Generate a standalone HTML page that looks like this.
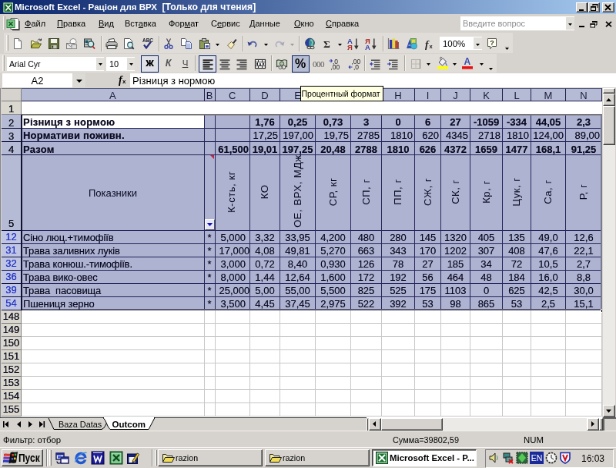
<!DOCTYPE html>
<html lang="ru"><head><meta charset="utf-8"><title>Microsoft Excel - Раціон для ВРХ</title>
<style>
html,body{margin:0;padding:0;background:#d6d3ce;}
body{width:616px;height:468px;overflow:hidden;position:relative;}
#root{will-change:transform;position:absolute;left:0;top:0;width:800px;height:600px;transform:scale(0.77,0.78);transform-origin:0 0;background:#d6d3ce;font-family:"Liberation Sans",sans-serif;font-size:11px;color:#000;overflow:hidden;}
#root div,#root span,#root svg{position:absolute;box-sizing:border-box;white-space:nowrap;}
.t{font-family:"Liberation Sans",sans-serif;}
.c{font-size:13px;line-height:17px;height:17px;text-shadow:0 0 .6px rgba(10,10,32,.55);}
.b{font-weight:bold;}
.sep{width:2px;border-left:1px solid #808080;border-right:1px solid #fff;}
.btn3d{background:#d6d3ce;border:1px solid;border-color:#fff #404040 #404040 #fff;box-shadow:inset -1px -1px 0 #808080;}
.sunk{border:1px solid;border-color:#808080 #fff #fff #808080;}
.xpsel{background:#b6bdd2;border:1px solid #0a246a;}
.xpon{background:#e0e1e8;border:1px solid #0a246a;}
</style></head>
<body><div id="root">
<div style="left:0px;top:0px;width:800px;height:18.4px;background:linear-gradient(90deg,#0a246a 0%,#a6caf0 100%);"></div>
<svg style="left:3.5px;top:2.5px" width="13.5" height="13.5" viewBox="0 0 16 16" preserveAspectRatio="none"><rect x="0" y="0" width="16" height="16" fill="#17642a"/><rect x="1.2" y="1.2" width="13.6" height="13.6" fill="none" stroke="#bfe6c4" stroke-width="1.3"/><path d="M4 3.500 L12 12.500 M12 3.500 L4 12.500" stroke="#f4fff4" stroke-width="2" fill="none"/></svg>
<span class="t" style="left:19px;top:2px;color:#fff;font-weight:bold;font-size:11.55px;line-height:14px;">Microsoft Excel - Раціон для ВРХ</span>
<span class="t" style="left:210.5px;top:2px;color:#fff;font-weight:bold;font-size:12.2px;line-height:14px;">[Только для чтения]</span>
<div class='btn3d' style="left:748px;top:3px;width:15px;height:13px;"></div>
<div style="left:752px;top:12px;width:6px;height:2px;background:#000"></div>
<div class='btn3d' style="left:764px;top:3px;width:15px;height:13px;"></div>
<svg style="left:766px;top:4px" width="12" height="11" viewBox="0 0 12 11"><path d="M4 1.5h6v4.5M4 1.5v2" stroke="#000" stroke-width="1" fill="none"/><rect x="3.5" y="1" width="7" height="1.6" fill="#000"/><rect x="1.5" y="4.5" width="6" height="5" fill="#d6d3ce" stroke="#000"/><rect x="1" y="4" width="7" height="1.8" fill="#000"/></svg>
<div class='btn3d' style="left:782px;top:3px;width:16px;height:13px;"></div>
<svg style="left:785px;top:5px" width="10" height="9" viewBox="0 0 10 9"><path d="M1 1l7 7M8 1l-7 7" stroke="#000" stroke-width="1.8" fill="none"/></svg>
<div style="left:0px;top:18px;width:800px;height:23px;background:#d6d3ce;"></div>
<div style="left:4px;top:21px;width:3px;height:17px;border-left:1px solid #f6f4f0;border-right:1px solid #a8a49c;background:#d6d3ce"></div>
<svg style="left:8px;top:22px" width="18" height="18" viewBox="0 0 18 18"><path d="M6 1.500h8.500l2 2v12h-10.500z" fill="#fff" stroke="#555"/><path d="M17 5v11.500h-9" stroke="#333" fill="none" stroke-width="1.200"/><rect x="1" y="3.500" width="10" height="10" fill="#7cc88a" stroke="#2a7a3a"/><path d="M3.500 6l5 5M8.500 6l-5 5" stroke="#155a25" stroke-width="1.600"/></svg>
<span class="t" style="left:32px;top:23px;font-size:11px;line-height:14px;"><u>Ф</u>айл</span>
<span class="t" style="left:74px;top:23px;font-size:11px;line-height:14px;"><u>П</u>равка</span>
<span class="t" style="left:128px;top:23px;font-size:11px;line-height:14px;"><u>В</u>ид</span>
<span class="t" style="left:162px;top:23px;font-size:11px;line-height:14px;">Вст<u>а</u>вка</span>
<span class="t" style="left:219px;top:23px;font-size:11px;line-height:14px;">Фор<u>м</u>ат</span>
<span class="t" style="left:274px;top:23px;font-size:11px;line-height:14px;">С<u>е</u>рвис</span>
<span class="t" style="left:324px;top:23px;font-size:11px;line-height:14px;"><u>Д</u>анные</span>
<span class="t" style="left:382px;top:23px;font-size:11px;line-height:14px;"><u>О</u>кно</span>
<span class="t" style="left:423px;top:23px;font-size:11px;line-height:14px;"><u>С</u>правка</span>
<div style="left:598px;top:21px;width:148px;height:18px;background:#fff;"></div>
<span class="t" style="left:601px;top:23px;color:#8c8c8c;font-size:11px;line-height:14px;">Введите вопрос</span>
<div style="left:735px;top:22px;width:11px;height:16px;background:#e0ded8;"></div>
<svg style="left:738px;top:29.5px" width="5" height="3" viewBox="0 0 5 3"><path d="M0 0h5l-2.5 3z" fill="#000"/></svg>
<div style="left:752px;top:32.5px;width:7px;height:2.2px;background:#000"></div>
<svg style="left:765.5px;top:25.500px" width="10" height="10" viewBox="0 0 10 10"><path d="M3.500 1.500h5.500v4.500h-1.500" stroke="#000" stroke-width="1" fill="none"/><rect x="3" y="1" width="6.500" height="1.800" fill="#000"/><rect x="1" y="4.500" width="5.500" height="4.500" fill="#f4f4f0" stroke="#000"/><rect x=".500" y="4" width="6.500" height="1.800" fill="#000"/></svg>
<svg style="left:785.5px;top:27px" width="9" height="8" viewBox="0 0 9 8"><path d="M1 .800l7 6.400M8 .800l-7 6.400" stroke="#000" stroke-width="1.700" fill="none"/></svg>
<div style="left:0px;top:43px;width:800px;height:26px;background:#d6d3ce;"></div>
<div style="left:5px;top:42px;width:661px;height:26px;background:#e0ddd8;"></div>
<div style="left:8px;top:45px;width:3px;height:20px;border-left:1px solid #f6f4f0;border-right:1px solid #a8a49c;"></div>
<svg style="left:15.399999999999999px;top:47.5px" width="16" height="16" viewBox="0 0 16 16"><path d="M3.5 1.5h6l3 3v10h-9z" fill="#fff" stroke="#6a6a6a"/><path d="M9.5 1.5v3h3" fill="#e8e8e8" stroke="#6a6a6a"/></svg>
<svg style="left:38.7px;top:47.5px" width="16" height="16" viewBox="0 0 16 16"><path d="M1.5 13.5v-9h3l1 1.5h5v2" fill="#f2f0a4" stroke="#55551a"/><path d="M1.5 13.5l2.5-5.5h10.5l-3 5.5z" fill="#b9b94a" stroke="#55551a"/><path d="M10 3.5c1.5-2 3.5-1.5 4 0M14.5 1.5v2.3h-2.3" fill="none" stroke="#222" stroke-width="1"/></svg>
<svg style="left:61.900000000000006px;top:47.5px" width="16" height="16" viewBox="0 0 16 16"><rect x="1.5" y="1.5" width="13" height="13" fill="#66743c" stroke="#343c20"/><rect x="4" y="2" width="8" height="5" fill="#f2f2f2"/><rect x="4" y="9.5" width="8" height="5" fill="#c8c8c0" stroke="#3a4420" stroke-width=".6"/><rect x="5.2" y="10.5" width="2" height="3" fill="#3a4420"/></svg>
<svg style="left:85.0px;top:47.5px" width="16" height="16" viewBox="0 0 16 16"><circle cx="10" cy="5.5" r="4" fill="#f8f8f8" stroke="#8a8a8a"/><rect x="1.5" y="7.5" width="10" height="7" fill="#e6e6e6" stroke="#7a7a7a"/><path d="M1.5 7.5l5 4 5-4" fill="none" stroke="#7a7a7a"/><rect x="8" y="9" width="6.5" height="5.5" fill="#dcdcdc" stroke="#8a8a8a"/></svg>
<svg style="left:108.2px;top:47.5px" width="16" height="16" viewBox="0 0 16 16"><rect x="1.500" y="2" width="9" height="10" fill="#c8d0d0" stroke="#333"/><rect x="2.500" y="3.500" width="4" height="3.500" fill="#1a5a6a"/><path d="M2.500 9h5" stroke="#345" /><circle cx="10" cy="8.500" r="3.700" fill="#cfeaea" stroke="#2a4a4a" stroke-width="1.400"/><path d="M12.5 11.5l2.5 3" stroke="#c02020" stroke-width="1.8"/></svg>
<div style="left:131px;top:46px;width:1px;height:20px;background:#a6a398;"></div>
<div style="left:132px;top:46px;width:1px;height:20px;background:#f4f2ee;"></div>
<svg style="left:137.0px;top:47.5px" width="16" height="16" viewBox="0 0 16 16"><path d="M4.500 6v-3.500l6.500-1 1 4.500" fill="#fff" stroke="#444"/><path d="M1 7.500l3-2h9l2 2v4.500h-14z" fill="#a4a4a4" stroke="#333"/><path d="M1 8h14" stroke="#d8d8d8" stroke-width="1"/><path d="M3 10.500h10l1 4h-12z" fill="#eee" stroke="#333"/><rect x="11.500" y="8.800" width="1.800" height="1" fill="#4a4"/></svg>
<svg style="left:159.0px;top:47.5px" width="16" height="16" viewBox="0 0 16 16"><path d="M2.5 1.5h7l3 3v10h-10z" fill="#fff" stroke="#555"/><circle cx="10" cy="9.5" r="3.3" fill="#d6efef" stroke="#2a5a6a" stroke-width="1.2"/><path d="M12.3 12l2.4 2.8" stroke="#2a3a4a" stroke-width="1.8"/></svg>
<svg style="left:182.7px;top:47.5px" width="16" height="16" viewBox="0 0 16 16"><text x="2" y="6" font-family="Liberation Sans,sans-serif" font-size="6.500" font-weight="bold" fill="#223">ABC</text><path d="M4 9.500l3 4 6-8" fill="none" stroke="#2a2f80" stroke-width="2.200"/></svg>
<div style="left:206px;top:46px;width:1px;height:20px;background:#a6a398;"></div>
<div style="left:207px;top:46px;width:1px;height:20px;background:#f4f2ee;"></div>
<svg style="left:211.0px;top:47.5px" width="16" height="16" viewBox="0 0 16 16"><path d="M5.5 1.5l4.5 9M10.5 1.5l-4.500 9" stroke="#445" stroke-width="1.2" fill="none"/><circle cx="5" cy="12.3" r="2" fill="none" stroke="#3a4ab0" stroke-width="1.4"/><circle cx="11" cy="12.300" r="2" fill="none" stroke="#3a4ab0" stroke-width="1.4"/></svg>
<svg style="left:233.7px;top:47.5px" width="16" height="16" viewBox="0 0 16 16"><path d="M1.5 1.5h5l2 2v7h-7z" fill="#fff" stroke="#556"/><path d="M7.5 5.500h5l2 2v7h-7z" fill="#dfe6f8" stroke="#445a9a"/><path d="M9 9h4M9 11h4M9 13h4" stroke="#7a8ac0" stroke-width=".8"/></svg>
<svg style="left:258.0px;top:47.5px" width="16" height="16" viewBox="0 0 16 16"><rect x="1.5" y="3.5" width="11" height="11" fill="#8a9a5a" stroke="#3c4424"/><rect x="4.5" y="1.5" width="5" height="3.5" fill="#c8c8c8" stroke="#444"/><rect x="7.500" y="7.500" width="7" height="7" fill="#fff" stroke="#445"/><rect x="9" y="10" width="4" height="3" fill="#4a5ab0"/></svg>
<svg style="left:280.0px;top:55.5px" width="5" height="3" viewBox="0 0 5 3"><path d="M0 0h5l-2.5 3z" fill="#000"/></svg>
<svg style="left:293.0px;top:47.5px" width="16" height="16" viewBox="0 0 16 16"><path d="M9 7l4-5 1.500 1.200-4 5z" fill="#333"/><path d="M2.500 10l5-4.500 4 3.500-4.500 5.500z" fill="#f6edc0" stroke="#7a6a3a"/></svg>
<div style="left:315px;top:46px;width:1px;height:20px;background:#a6a398;"></div>
<div style="left:316px;top:46px;width:1px;height:20px;background:#f4f2ee;"></div>
<svg style="left:320.0px;top:47.5px" width="16" height="16" viewBox="0 0 16 16"><path d="M4.500 8.500c1.500-3.500 6.500-4 8-.500 .6 1.600-.2 3-1.200 3.800" fill="none" stroke="#5564a8" stroke-width="1.700"/><path d="M1.500 5.500l1.500 5.500 4.500-3z" fill="#3a478c"/></svg>
<svg style="left:343.1px;top:55.5px" width="5" height="3" viewBox="0 0 5 3"><path d="M0 0h5l-2.5 3z" fill="#000"/></svg>
<svg style="left:355.0px;top:47.5px" width="16" height="16" viewBox="0 0 16 16"><path d="M11.500 8.500c-1.500-3.500-6.500-4-8-.500-.6 1.600 .2 3 1.200 3.800" fill="none" stroke="#b4b4c0" stroke-width="1.700"/><path d="M14.500 5.500l-1.500 5.500-4.500-3z" fill="#a8a8b8"/></svg>
<svg style="left:376.5px;top:55.5px" width="5" height="3" viewBox="0 0 5 3"><path d="M0 0h5l-2.5 3z" fill="#9a9a9a"/></svg>
<div style="left:388px;top:46px;width:1px;height:20px;background:#a6a398;"></div>
<div style="left:389px;top:46px;width:1px;height:20px;background:#f4f2ee;"></div>
<svg style="left:394.7px;top:47.5px" width="16" height="16" viewBox="0 0 16 16"><circle cx="7.500" cy="7" r="5.800" fill="#3a8f9a" stroke="#24406a"/><path d="M7.500 1.200a5.800 5.800 0 0 0 0 11.600c-2-3-2-8 0-11.600z" fill="#2c3c9c"/><path d="M8.500 3c2 1 3 3 2 5s0 3 1 3.500" fill="none" stroke="#8ad0a0" stroke-width="1.600"/><ellipse cx="6.500" cy="13" rx="2.600" ry="1.700" fill="#ddd" stroke="#333"/><ellipse cx="10.500" cy="13" rx="2.600" ry="1.700" fill="#ddd" stroke="#333"/></svg>
<span class="t" style="left:420px;top:48.5px;font-family:'Liberation Serif',serif;font-weight:bold;font-size:13.5px;line-height:15px;color:#222;">Σ</span>
<svg style="left:439.2px;top:55.5px" width="5" height="3" viewBox="0 0 5 3"><path d="M0 0h5l-2.5 3z" fill="#000"/></svg>
<svg style="left:451.0px;top:47.5px" width="16" height="16" viewBox="0 0 16 16"><text x="0" y="7.800" font-family="Liberation Sans,sans-serif" font-size="9.500" font-weight="bold" fill="#3844a8">А</text><text x="0" y="15.800" font-family="Liberation Sans,sans-serif" font-size="9.500" font-weight="bold" fill="#a83030">Я</text><path d="M11.800 1.500v11" stroke="#333" stroke-width="1.400"/><path d="M9 10.500h5.600l-2.800 5z" fill="#333"/></svg>
<svg style="left:474.0px;top:47.5px" width="16" height="16" viewBox="0 0 16 16"><text x="0" y="7.800" font-family="Liberation Sans,sans-serif" font-size="9.500" font-weight="bold" fill="#a83030">Я</text><text x="0" y="15.800" font-family="Liberation Sans,sans-serif" font-size="9.500" font-weight="bold" fill="#3844a8">А</text><path d="M11.800 1.500v11" stroke="#333" stroke-width="1.400"/><path d="M9 10.500h5.600l-2.800 5z" fill="#333"/></svg>
<div style="left:497px;top:46px;width:1px;height:20px;background:#a6a398;"></div>
<div style="left:498px;top:46px;width:1px;height:20px;background:#f4f2ee;"></div>
<svg style="left:503.0px;top:47.5px" width="16" height="16" viewBox="0 0 16 16"><path d="M1.500 1v13.500h14" fill="none" stroke="#777" stroke-width="1.200"/><rect x="3" y="3" width="3.400" height="11" fill="#3838a4"/><rect x="6.600" y="1.500" width="3.400" height="12.500" fill="#e8d838"/><rect x="10.200" y="4" width="3.400" height="10" fill="#b84430"/><rect x="13.200" y="6" width="1.600" height="8" fill="#8a3a3a"/></svg>
<svg style="left:526.7px;top:47.5px" width="16" height="16" viewBox="0 0 16 16"><path d="M1 14l4-12 3.500 12z" fill="#3450b4"/><path d="M3.500 10h3" stroke="#dfe6ff" stroke-width="1"/><rect x="6.500" y="1.500" width="7" height="7" fill="#8ac858" stroke="#3a6a2a" stroke-width=".6"/><rect x="8" y="3" width="4" height="4" fill="#e8d848"/><circle cx="10.500" cy="11" r="4" fill="#40b8d8" stroke="#2a6a8a" stroke-width=".6"/></svg>
<span class="t" style="left:552px;top:48.5px;font-family:'Liberation Serif',serif;font-weight:bold;font-size:13.5px;line-height:15px;color:#222;"><i>f</i></span>
<span class="t" style="left:557.5px;top:55px;font-weight:bold;font-size:7.500px;line-height:9px;color:#222;">x</span>
<div style="left:571px;top:47px;width:55px;height:17px;background:#fff;"></div>
<span class="t" style="left:575px;top:49px;font-size:11.400px;line-height:14px;">100%</span>
<div style="left:615px;top:48px;width:11px;height:15px;background:#e2e0da;"></div>
<svg style="left:618.0px;top:55.5px" width="5" height="3" viewBox="0 0 5 3"><path d="M0 0h5l-2.5 3z" fill="#000"/></svg>
<svg style="left:631.0px;top:47.5px" width="16" height="16" viewBox="0 0 16 16"><path d="M2.500 1.500h11v10h-5l-3 3v-3h-3z" fill="#fffff0" stroke="#555"/><text x="5.300" y="10" font-family="Liberation Sans,sans-serif" font-size="9" font-weight="bold" fill="#333">?</text></svg>
<svg style="left:655.5px;top:60.5px" width="5" height="3" viewBox="0 0 5 3"><path d="M0 0h5l-2.5 3z" fill="#000"/></svg>
<div style="left:655px;top:58.5px;width:6px;height:1px;background:#d6d3ce"></div>
<div style="left:0px;top:69px;width:800px;height:25px;background:#d6d3ce;"></div>
<div style="left:0px;top:69px;width:645px;height:24px;background:#e0ddd8;"></div>
<div style="left:3px;top:71px;width:3px;height:20px;border-left:1px solid #f6f4f0;border-right:1px solid #a8a49c;"></div>
<div style="left:9px;top:73px;width:126px;height:18px;background:#fff;"></div>
<span class="t" style="left:12px;top:75px;font-size:10.6px;line-height:14px;">Arial Cyr</span>
<div style="left:125px;top:74px;width:10px;height:16px;background:#e2e0da;"></div>
<svg style="left:127.5px;top:81.0px" width="5" height="3" viewBox="0 0 5 3"><path d="M0 0h5l-2.5 3z" fill="#000"/></svg>
<div style="left:138px;top:73px;width:37px;height:18px;background:#fff;"></div>
<span class="t" style="left:142px;top:75px;font-size:11px;line-height:14px;">10</span>
<div style="left:165px;top:74px;width:10px;height:16px;background:#e2e0da;"></div>
<svg style="left:167.5px;top:81.0px" width="5" height="3" viewBox="0 0 5 3"><path d="M0 0h5l-2.5 3z" fill="#000"/></svg>
<div class='xpon' style="left:183px;top:70.5px;width:23px;height:22px;"></div>
<span class="t" style="left:183px;top:74px;width:23px;text-align:center;font-weight:bold;font-size:11.5px;line-height:15px;text-shadow:.3px 0 0 #000;">Ж</span>
<span class="t" style="left:207px;top:74px;width:23px;text-align:center;font-weight:bold;font-size:12.5px;line-height:15px;color:#555;"><i>К</i></span>
<span class="t" style="left:229px;top:74px;width:23px;text-align:center;font-size:11.5px;line-height:15px;color:#444;"><u>Ч</u></span>
<div style="left:253px;top:71px;width:1px;height:20px;background:#a6a398;"></div>
<div style="left:254px;top:71px;width:1px;height:20px;background:#f4f2ee;"></div>
<div class='xpon' style="left:258px;top:70.5px;width:23px;height:22px;"></div>
<svg style="left:261.5px;top:73.5px" width="16" height="16" viewBox="0 0 16 16"><rect x="1.5" y="2.2" width="13" height="2" fill="#2c2c2c"/><rect x="1.5" y="5.0" width="9" height="2" fill="#2c2c2c"/><rect x="1.5" y="7.8" width="13" height="2" fill="#2c2c2c"/><rect x="1.5" y="10.599999999999998" width="9" height="2" fill="#2c2c2c"/><rect x="1.5" y="13.399999999999999" width="13" height="2" fill="#2c2c2c"/></svg>
<svg style="left:284.0px;top:73.5px" width="16" height="16" viewBox="0 0 16 16"><rect x="1.5" y="2.2" width="13" height="2" fill="#5a5a5a"/><rect x="3.5" y="5.0" width="9" height="2" fill="#5a5a5a"/><rect x="1.5" y="7.8" width="13" height="2" fill="#5a5a5a"/><rect x="3.5" y="10.599999999999998" width="9" height="2" fill="#5a5a5a"/><rect x="1.5" y="13.399999999999999" width="13" height="2" fill="#5a5a5a"/></svg>
<svg style="left:306.0px;top:73.5px" width="16" height="16" viewBox="0 0 16 16"><rect x="1.5" y="2.2" width="13" height="2" fill="#5a5a5a"/><rect x="5.5" y="5.0" width="9" height="2" fill="#5a5a5a"/><rect x="1.5" y="7.8" width="13" height="2" fill="#5a5a5a"/><rect x="5.5" y="10.599999999999998" width="9" height="2" fill="#5a5a5a"/><rect x="1.5" y="13.399999999999999" width="13" height="2" fill="#5a5a5a"/></svg>
<svg style="left:330.0px;top:73.5px" width="16" height="16" viewBox="0 0 16 16"><rect x="1.500" y="2.500" width="13" height="11" fill="#fff" stroke="#333" stroke-width="1.200"/><path d="M1.500 5.500h13M1.500 10.500h13M5.500 2.500v3M10.500 2.500v3M5.500 10.500v3M10.500 10.500v3" stroke="#333" stroke-width="1"/><path d="M2.500 8l2.500-2v4zM13.500 8l-2.500-2v4z" fill="#111"/><text x="6.200" y="10" font-family="Liberation Sans,sans-serif" font-size="5.500" font-weight="bold" fill="#111">a</text></svg>
<div style="left:352px;top:71px;width:1px;height:20px;background:#a6a398;"></div>
<div style="left:353px;top:71px;width:1px;height:20px;background:#f4f2ee;"></div>
<svg style="left:358.0px;top:73.5px" width="16" height="16" viewBox="0 0 16 16"><path d="M1.500 3.500c3-2 5 1 7 0s4-1 6 0v8c-2-1-4-1-6 0s-4-2-7 0z" fill="#cdd6c4" stroke="#3a4a3a" stroke-width="1.200"/><circle cx="8" cy="7.500" r="2.600" fill="#b4c0a8" stroke="#3a4a3a" stroke-width="1"/><circle cx="10.500" cy="12" r="2.400" fill="#dedede" stroke="#444" stroke-width="1"/><circle cx="6" cy="12.500" r="2" fill="#d0d0d0" stroke="#555" stroke-width=".8"/></svg>
<div class='xpsel' style="left:378.5px;top:70.5px;width:23px;height:22px;"></div>
<span class="t" style="left:378.5px;top:72.5px;width:23px;text-align:center;font-weight:bold;font-size:16px;line-height:17px;">%</span>
<span class="t" style="left:402px;top:75px;width:23px;text-align:center;font-family:'Liberation Serif',serif;font-size:11px;line-height:14px;color:#555;letter-spacing:-.5px">000</span>
<svg style="left:427.0px;top:73.5px" width="16" height="16" viewBox="0 0 16 16"><text x="5" y="7.500" font-family="Liberation Sans,sans-serif" font-size="8.500" fill="#222">,0</text><text x="2.500" y="15.500" font-family="Liberation Sans,sans-serif" font-size="8.500" fill="#222">,00</text><path d="M0.500 4h4M4.500 4l-2-1.800M4.500 4l-2 1.800" stroke="#3040b0" stroke-width="1.100" fill="none"/></svg>
<svg style="left:452.0px;top:73.5px" width="16" height="16" viewBox="0 0 16 16"><text x="4.500" y="7.500" font-family="Liberation Sans,sans-serif" font-size="8.500" fill="#222">,00</text><text x="7" y="15.500" font-family="Liberation Sans,sans-serif" font-size="8.500" fill="#222">,0</text><path d="M1 12h4.500M1 12l2-1.800M1 12l2 1.800" stroke="#3040b0" stroke-width="1.100" fill="none"/></svg>
<div style="left:473px;top:71px;width:1px;height:20px;background:#a6a398;"></div>
<div style="left:474px;top:71px;width:1px;height:20px;background:#f4f2ee;"></div>
<svg style="left:479.0px;top:73.5px" width="16" height="16" viewBox="0 0 16 16"><rect x="3" y="2.5" width="11.5" height="1.400" fill="#444"/><rect x="7" y="5.3" width="7.5" height="1.400" fill="#444"/><rect x="7" y="8.1" width="7.5" height="1.400" fill="#444"/><rect x="7" y="10.899999999999999" width="7.5" height="1.400" fill="#444"/><rect x="3" y="13.7" width="11.5" height="1.400" fill="#444"/><path d="M1 8l3-2.500v5z" fill="#3a4ab0"/><rect x="3.500" y="7.400" width="2.500" height="1.200" fill="#3a4ab0"/></svg>
<svg style="left:502.0px;top:73.5px" width="16" height="16" viewBox="0 0 16 16"><rect x="3" y="2.5" width="11.5" height="1.400" fill="#444"/><rect x="7" y="5.3" width="7.5" height="1.400" fill="#444"/><rect x="7" y="8.1" width="7.5" height="1.400" fill="#444"/><rect x="7" y="10.899999999999999" width="7.5" height="1.400" fill="#444"/><rect x="3" y="13.7" width="11.5" height="1.400" fill="#444"/><path d="M6 8l-3-2.500v5z" fill="#3a4ab0"/><rect x="1" y="7.400" width="2.500" height="1.200" fill="#3a4ab0"/></svg>
<div style="left:525px;top:71px;width:1px;height:20px;background:#a6a398;"></div>
<div style="left:526px;top:71px;width:1px;height:20px;background:#f4f2ee;"></div>
<svg style="left:532.0px;top:73.5px" width="16" height="16" viewBox="0 0 16 16"><rect x="2.500" y="2.500" width="11" height="11" fill="none" stroke="#b0aea6" stroke-width="1"/><path d="M8 2.500v11M2.500 8h11" stroke="#bcbab2" stroke-width="1"/><path d="M13.500 2v12" stroke="#8a8880" stroke-width="1.200"/></svg>
<svg style="left:553.5px;top:81.0px" width="5" height="3" viewBox="0 0 5 3"><path d="M0 0h5l-2.5 3z" fill="#000"/></svg>
<svg style="left:567.0px;top:72.0px" width="16" height="17" viewBox="0 0 16 17"><path d="M3 8l5-5.500 4.500 4.500-5 5z" fill="#f0f0f0" stroke="#445"/><path d="M7 2c-2-2-3 .5-1.500 2.500" fill="none" stroke="#445"/><path d="M11 8c2 1 3 3 2.500 5-.8-1-2-2.500-2.500-5z" fill="#4a6ac0"/><rect x="1" y="13" width="14" height="3.500" fill="#ffff00"/></svg>
<svg style="left:587.5px;top:81.0px" width="5" height="3" viewBox="0 0 5 3"><path d="M0 0h5l-2.5 3z" fill="#000"/></svg>
<svg style="left:599.0px;top:72.0px" width="16" height="17" viewBox="0 0 16 17"><text x="3.500" y="11" font-family="Liberation Sans,sans-serif" font-size="12" font-weight="bold" fill="#3a4ab0">A</text><rect x="1" y="13" width="14" height="3.500" fill="#e81010"/></svg>
<svg style="left:622.5px;top:81.0px" width="5" height="3" viewBox="0 0 5 3"><path d="M0 0h5l-2.5 3z" fill="#000"/></svg>
<svg style="left:634.5px;top:86.5px" width="5" height="3" viewBox="0 0 5 3"><path d="M0 0h5l-2.5 3z" fill="#000"/></svg>
<div style="left:0px;top:93px;width:800px;height:20px;background:#d6d3ce;"></div>
<div style="left:3px;top:94px;width:91px;height:18px;background:#fff;"></div>
<span class="t" style="left:3px;top:96px;font-size:13px;line-height:15px;width:91px;text-align:center;">A2</span>
<div style="left:94px;top:94px;width:17px;height:18px;background:#dcdad4;"></div>
<svg style="left:99px;top:102px" width="8" height="4" viewBox="0 0 8 4"><path d="M0 0h8l-4.0 4z" fill="#000"/></svg>
<span class="t" style="left:154px;top:95px;font-family:'Liberation Serif',serif;font-weight:bold;font-size:14px;line-height:15px;"><i>f</i></span>
<span class="t" style="left:159px;top:100px;font-family:'Liberation Sans',sans-serif;font-weight:bold;font-size:8px;line-height:9px;">x</span>
<div style="left:169px;top:94px;width:631px;height:18px;background:#fff;"></div>
<span class="t" style="left:172px;top:96px;font-size:13px;line-height:15px;">Різниця з нормою</span>
<div style="left:0px;top:113px;width:800px;height:423px;background:#fff;"></div>
<div style="left:0px;top:113px;width:2px;height:423px;background:#d6d3ce;"></div>
<div style="left:0px;top:113px;width:1.3px;height:423px;background:#85858c;"></div>
<div style="left:2px;top:113px;width:26px;height:17px;background:#d6d3ce;border-right:1px solid #808080;border-bottom:1px solid #808080;border-top:1px solid #808080"></div>
<div style="left:28px;top:113px;width:237.5px;height:17px;background:#b5bbd5;border-right:1px solid #20204c;border-bottom:1px solid #20204c;border-top:1px solid #55597a;"></div>
<span class="t" style="left:28px;top:115px;width:236.5px;text-align:center;font-size:13px;line-height:15px;color:#1a1a3a;">A</span>
<div style="left:265.5px;top:113px;width:14.0px;height:17px;background:#b5bbd5;border-right:1px solid #20204c;border-bottom:1px solid #20204c;border-top:1px solid #55597a;"></div>
<span class="t" style="left:265.5px;top:115px;width:13.0px;text-align:center;font-size:13px;line-height:15px;color:#1a1a3a;">B</span>
<div style="left:279.5px;top:113px;width:45.5px;height:17px;background:#b5bbd5;border-right:1px solid #20204c;border-bottom:1px solid #20204c;border-top:1px solid #55597a;"></div>
<span class="t" style="left:279.5px;top:115px;width:44.5px;text-align:center;font-size:13px;line-height:15px;color:#1a1a3a;">C</span>
<div style="left:325px;top:113px;width:39px;height:17px;background:#b5bbd5;border-right:1px solid #20204c;border-bottom:1px solid #20204c;border-top:1px solid #55597a;"></div>
<span class="t" style="left:325px;top:115px;width:38px;text-align:center;font-size:13px;line-height:15px;color:#1a1a3a;">D</span>
<div style="left:364px;top:113px;width:46px;height:17px;background:#b5bbd5;border-right:1px solid #20204c;border-bottom:1px solid #20204c;border-top:1px solid #55597a;"></div>
<span class="t" style="left:364px;top:115px;width:45px;text-align:center;font-size:13px;line-height:15px;color:#1a1a3a;">E</span>
<div style="left:410px;top:113px;width:46px;height:17px;background:#b5bbd5;border-right:1px solid #20204c;border-bottom:1px solid #20204c;border-top:1px solid #55597a;"></div>
<span class="t" style="left:410px;top:115px;width:45px;text-align:center;font-size:13px;line-height:15px;color:#1a1a3a;">F</span>
<div style="left:456px;top:113px;width:40px;height:17px;background:#b5bbd5;border-right:1px solid #20204c;border-bottom:1px solid #20204c;border-top:1px solid #55597a;"></div>
<span class="t" style="left:456px;top:115px;width:39px;text-align:center;font-size:13px;line-height:15px;color:#1a1a3a;">G</span>
<div style="left:496px;top:113px;width:43px;height:17px;background:#b5bbd5;border-right:1px solid #20204c;border-bottom:1px solid #20204c;border-top:1px solid #55597a;"></div>
<span class="t" style="left:496px;top:115px;width:42px;text-align:center;font-size:13px;line-height:15px;color:#1a1a3a;">H</span>
<div style="left:539px;top:113px;width:34px;height:17px;background:#b5bbd5;border-right:1px solid #20204c;border-bottom:1px solid #20204c;border-top:1px solid #55597a;"></div>
<span class="t" style="left:539px;top:115px;width:33px;text-align:center;font-size:13px;line-height:15px;color:#1a1a3a;">I</span>
<div style="left:573px;top:113px;width:38px;height:17px;background:#b5bbd5;border-right:1px solid #20204c;border-bottom:1px solid #20204c;border-top:1px solid #55597a;"></div>
<span class="t" style="left:573px;top:115px;width:37px;text-align:center;font-size:13px;line-height:15px;color:#1a1a3a;">J</span>
<div style="left:611px;top:113px;width:42px;height:17px;background:#b5bbd5;border-right:1px solid #20204c;border-bottom:1px solid #20204c;border-top:1px solid #55597a;"></div>
<span class="t" style="left:611px;top:115px;width:41px;text-align:center;font-size:13px;line-height:15px;color:#1a1a3a;">K</span>
<div style="left:653px;top:113px;width:37px;height:17px;background:#b5bbd5;border-right:1px solid #20204c;border-bottom:1px solid #20204c;border-top:1px solid #55597a;"></div>
<span class="t" style="left:653px;top:115px;width:36px;text-align:center;font-size:13px;line-height:15px;color:#1a1a3a;">L</span>
<div style="left:690px;top:113px;width:45px;height:17px;background:#b5bbd5;border-right:1px solid #20204c;border-bottom:1px solid #20204c;border-top:1px solid #55597a;"></div>
<span class="t" style="left:690px;top:115px;width:44px;text-align:center;font-size:13px;line-height:15px;color:#1a1a3a;">M</span>
<div style="left:735px;top:113px;width:47px;height:17px;background:#b5bbd5;border-right:1px solid #20204c;border-bottom:1px solid #20204c;border-top:1px solid #55597a;"></div>
<span class="t" style="left:735px;top:115px;width:46px;text-align:center;font-size:13px;line-height:15px;color:#1a1a3a;">N</span>
<div style="left:782px;top:113px;width:2px;height:17px;background:#fff"></div>
<div style="left:2px;top:130px;width:26px;height:17px;background:#dad7cf;border-right:1px solid #808080;border-bottom:1px solid #fff;box-shadow:inset 0 -1px 0 #808080;border-bottom:0;"></div>
<span class="t" style="left:2px;top:131.5px;width:25px;text-align:center;font-size:13px;line-height:16px;color:#101020;text-shadow:0 0 .6px #101020;">1</span>
<div style="left:2px;top:147px;width:26px;height:18px;background:#b5bbd5;border-right:1px solid #10103c;border-bottom:1px solid #10103c;"></div>
<span class="t" style="left:2px;top:149.5px;width:25px;text-align:center;font-size:13px;line-height:16px;color:#101020;text-shadow:0 0 .6px #101020;">2</span>
<div style="left:2px;top:165px;width:26px;height:17px;background:#b5bbd5;border-right:1px solid #10103c;border-bottom:1px solid #10103c;"></div>
<span class="t" style="left:2px;top:166.5px;width:25px;text-align:center;font-size:13px;line-height:16px;color:#101020;text-shadow:0 0 .6px #101020;">3</span>
<div style="left:2px;top:182px;width:26px;height:17px;background:#b5bbd5;border-right:1px solid #10103c;border-bottom:1px solid #10103c;"></div>
<span class="t" style="left:2px;top:183.5px;width:25px;text-align:center;font-size:13px;line-height:16px;color:#101020;text-shadow:0 0 .6px #101020;">4</span>
<div style="left:2px;top:199px;width:26px;height:97px;background:#b5bbd5;border-right:1px solid #10103c;border-bottom:1.7px solid #10103c;"></div>
<span class="t" style="left:2px;top:278.7px;width:25px;text-align:center;font-size:13px;line-height:16px;color:#101020;text-shadow:0 0 .6px #101020;">5</span>
<div style="left:2px;top:296px;width:26px;height:17px;background:#bfc5e3;border-right:1px solid #10103c;border-bottom:1.7px solid #10103c;"></div>
<span class="t" style="left:2px;top:295.7px;width:25px;text-align:center;font-size:13px;line-height:16px;color:#2838c8;text-shadow:0 0 .6px #2838c8;">12</span>
<div style="left:2px;top:313px;width:26px;height:17px;background:#bfc5e3;border-right:1px solid #10103c;border-bottom:1.7px solid #10103c;"></div>
<span class="t" style="left:2px;top:312.7px;width:25px;text-align:center;font-size:13px;line-height:16px;color:#2838c8;text-shadow:0 0 .6px #2838c8;">31</span>
<div style="left:2px;top:330px;width:26px;height:17px;background:#bfc5e3;border-right:1px solid #10103c;border-bottom:1.7px solid #10103c;"></div>
<span class="t" style="left:2px;top:329.7px;width:25px;text-align:center;font-size:13px;line-height:16px;color:#2838c8;text-shadow:0 0 .6px #2838c8;">32</span>
<div style="left:2px;top:347px;width:26px;height:17px;background:#bfc5e3;border-right:1px solid #10103c;border-bottom:1.7px solid #10103c;"></div>
<span class="t" style="left:2px;top:346.7px;width:25px;text-align:center;font-size:13px;line-height:16px;color:#2838c8;text-shadow:0 0 .6px #2838c8;">36</span>
<div style="left:2px;top:364px;width:26px;height:17px;background:#bfc5e3;border-right:1px solid #10103c;border-bottom:1.7px solid #10103c;"></div>
<span class="t" style="left:2px;top:363.7px;width:25px;text-align:center;font-size:13px;line-height:16px;color:#2838c8;text-shadow:0 0 .6px #2838c8;">39</span>
<div style="left:2px;top:381px;width:26px;height:17px;background:#bfc5e3;border-right:1px solid #10103c;border-bottom:1.7px solid #10103c;"></div>
<span class="t" style="left:2px;top:380.7px;width:25px;text-align:center;font-size:13px;line-height:16px;color:#2838c8;text-shadow:0 0 .6px #2838c8;">54</span>
<div style="left:2px;top:398px;width:26px;height:17px;background:#dad7cf;border-right:1px solid #808080;border-bottom:1px solid #fff;box-shadow:inset 0 -1px 0 #808080;border-bottom:0;"></div>
<span class="t" style="left:2px;top:397.7px;width:25px;text-align:center;font-size:13px;line-height:16px;color:#101020;text-shadow:0 0 .6px #101020;">148</span>
<div style="left:2px;top:415px;width:26px;height:17px;background:#dad7cf;border-right:1px solid #808080;border-bottom:1px solid #fff;box-shadow:inset 0 -1px 0 #808080;border-bottom:0;"></div>
<span class="t" style="left:2px;top:414.7px;width:25px;text-align:center;font-size:13px;line-height:16px;color:#101020;text-shadow:0 0 .6px #101020;">149</span>
<div style="left:2px;top:432px;width:26px;height:17px;background:#dad7cf;border-right:1px solid #808080;border-bottom:1px solid #fff;box-shadow:inset 0 -1px 0 #808080;border-bottom:0;"></div>
<span class="t" style="left:2px;top:431.7px;width:25px;text-align:center;font-size:13px;line-height:16px;color:#101020;text-shadow:0 0 .6px #101020;">150</span>
<div style="left:2px;top:449px;width:26px;height:17px;background:#dad7cf;border-right:1px solid #808080;border-bottom:1px solid #fff;box-shadow:inset 0 -1px 0 #808080;border-bottom:0;"></div>
<span class="t" style="left:2px;top:448.7px;width:25px;text-align:center;font-size:13px;line-height:16px;color:#101020;text-shadow:0 0 .6px #101020;">151</span>
<div style="left:2px;top:466px;width:26px;height:17px;background:#dad7cf;border-right:1px solid #808080;border-bottom:1px solid #fff;box-shadow:inset 0 -1px 0 #808080;border-bottom:0;"></div>
<span class="t" style="left:2px;top:465.7px;width:25px;text-align:center;font-size:13px;line-height:16px;color:#101020;text-shadow:0 0 .6px #101020;">152</span>
<div style="left:2px;top:483px;width:26px;height:17px;background:#dad7cf;border-right:1px solid #808080;border-bottom:1px solid #fff;box-shadow:inset 0 -1px 0 #808080;border-bottom:0;"></div>
<span class="t" style="left:2px;top:482.7px;width:25px;text-align:center;font-size:13px;line-height:16px;color:#101020;text-shadow:0 0 .6px #101020;">153</span>
<div style="left:2px;top:500px;width:26px;height:17px;background:#dad7cf;border-right:1px solid #808080;border-bottom:1px solid #fff;box-shadow:inset 0 -1px 0 #808080;border-bottom:0;"></div>
<span class="t" style="left:2px;top:499.7px;width:25px;text-align:center;font-size:13px;line-height:16px;color:#101020;text-shadow:0 0 .6px #101020;">154</span>
<div style="left:2px;top:517px;width:26px;height:17px;background:#dad7cf;border-right:1px solid #808080;border-bottom:1px solid #fff;box-shadow:inset 0 -1px 0 #808080;border-bottom:0;"></div>
<span class="t" style="left:2px;top:516.7px;width:25px;text-align:center;font-size:13px;line-height:16px;color:#101020;text-shadow:0 0 .6px #101020;">155</span>
<div style="left:28px;top:414px;width:754px;height:1px;background:#c8c8c8"></div>
<div style="left:28px;top:431px;width:754px;height:1px;background:#c8c8c8"></div>
<div style="left:28px;top:448px;width:754px;height:1px;background:#c8c8c8"></div>
<div style="left:28px;top:465px;width:754px;height:1px;background:#c8c8c8"></div>
<div style="left:28px;top:482px;width:754px;height:1px;background:#c8c8c8"></div>
<div style="left:28px;top:499px;width:754px;height:1px;background:#c8c8c8"></div>
<div style="left:28px;top:516px;width:754px;height:1px;background:#c8c8c8"></div>
<div style="left:28px;top:533px;width:754px;height:1px;background:#c8c8c8"></div>
<div style="left:264.5px;top:398px;width:1px;height:136px;background:#c8c8c8"></div>
<div style="left:278.5px;top:398px;width:1px;height:136px;background:#c8c8c8"></div>
<div style="left:324px;top:398px;width:1px;height:136px;background:#c8c8c8"></div>
<div style="left:363px;top:398px;width:1px;height:136px;background:#c8c8c8"></div>
<div style="left:409px;top:398px;width:1px;height:136px;background:#c8c8c8"></div>
<div style="left:455px;top:398px;width:1px;height:136px;background:#c8c8c8"></div>
<div style="left:495px;top:398px;width:1px;height:136px;background:#c8c8c8"></div>
<div style="left:538px;top:398px;width:1px;height:136px;background:#c8c8c8"></div>
<div style="left:572px;top:398px;width:1px;height:136px;background:#c8c8c8"></div>
<div style="left:610px;top:398px;width:1px;height:136px;background:#c8c8c8"></div>
<div style="left:652px;top:398px;width:1px;height:136px;background:#c8c8c8"></div>
<div style="left:689px;top:398px;width:1px;height:136px;background:#c8c8c8"></div>
<div style="left:734px;top:398px;width:1px;height:136px;background:#c8c8c8"></div>
<div style="left:781px;top:398px;width:1px;height:136px;background:#c8c8c8"></div>
<div style="left:782px;top:130px;width:1px;height:404px;background:#d6d3ce"></div>
<div style="left:28px;top:147px;width:754px;height:251px;background:#aeb3d1;"></div>
<div style="left:28px;top:148px;width:237px;height:16px;background:#fff;"></div>
<div style="left:28px;top:164px;width:754px;height:1px;background:#26265a"></div>
<div style="left:28px;top:181px;width:754px;height:1px;background:#26265a"></div>
<div style="left:28px;top:198px;width:754px;height:1px;background:#26265a"></div>
<div style="left:28px;top:295px;width:754px;height:1px;background:#26265a"></div>
<div style="left:28px;top:312px;width:754px;height:1px;background:#26265a"></div>
<div style="left:28px;top:329px;width:754px;height:1px;background:#26265a"></div>
<div style="left:28px;top:346px;width:754px;height:1px;background:#26265a"></div>
<div style="left:28px;top:363px;width:754px;height:1px;background:#26265a"></div>
<div style="left:28px;top:380px;width:754px;height:1px;background:#26265a"></div>
<div style="left:264.5px;top:147px;width:1px;height:251px;background:#26265a"></div>
<div style="left:278.5px;top:147px;width:1px;height:251px;background:#26265a"></div>
<div style="left:324px;top:147px;width:1px;height:251px;background:#26265a"></div>
<div style="left:363px;top:147px;width:1px;height:251px;background:#26265a"></div>
<div style="left:409px;top:147px;width:1px;height:251px;background:#26265a"></div>
<div style="left:455px;top:147px;width:1px;height:251px;background:#26265a"></div>
<div style="left:495px;top:147px;width:1px;height:251px;background:#26265a"></div>
<div style="left:538px;top:147px;width:1px;height:251px;background:#26265a"></div>
<div style="left:572px;top:147px;width:1px;height:251px;background:#26265a"></div>
<div style="left:610px;top:147px;width:1px;height:251px;background:#26265a"></div>
<div style="left:652px;top:147px;width:1px;height:251px;background:#26265a"></div>
<div style="left:689px;top:147px;width:1px;height:251px;background:#26265a"></div>
<div style="left:734px;top:147px;width:1px;height:251px;background:#26265a"></div>
<div style="left:28px;top:146px;width:755px;height:2px;background:#767676"></div>
<div style="left:780px;top:146px;width:3px;height:253px;background:#787a90"></div>
<div style="left:28px;top:396px;width:754px;height:2px;background:#55576e"></div>
<div style="left:27px;top:147px;width:2px;height:251px;background:#101030"></div>
<div style="left:780px;top:396px;width:5px;height:5px;background:#000;border:1px solid #fff"></div>
<span class="t c b" style="left:30px;top:148px;width:232.5px;text-align:left;color:#0a0a20;letter-spacing:.22px;">Різниця з нормою</span>
<span class="t c b" style="left:30px;top:165px;width:232.5px;text-align:left;color:#0a0a20;letter-spacing:.22px;">Нормативи поживн.</span>
<span class="t c b" style="left:30px;top:182px;width:232.5px;text-align:left;color:#0a0a20;margin-top:1px;letter-spacing:.22px;">Разом</span>
<span class="t c b" style="left:327px;top:148px;width:34px;text-align:center;color:#0a0a20;">1,76</span>
<span class="t c b" style="left:366px;top:148px;width:41px;text-align:center;color:#0a0a20;">0,25</span>
<span class="t c b" style="left:412px;top:148px;width:41px;text-align:center;color:#0a0a20;">0,73</span>
<span class="t c b" style="left:458px;top:148px;width:35px;text-align:center;color:#0a0a20;">3</span>
<span class="t c b" style="left:498px;top:148px;width:38px;text-align:center;color:#0a0a20;">0</span>
<span class="t c b" style="left:541px;top:148px;width:29px;text-align:center;color:#0a0a20;">6</span>
<span class="t c b" style="left:575px;top:148px;width:33px;text-align:center;color:#0a0a20;">27</span>
<span class="t c b" style="left:613px;top:148px;width:37px;text-align:center;color:#0a0a20;">-1059</span>
<span class="t c b" style="left:655px;top:148px;width:32px;text-align:center;color:#0a0a20;">-334</span>
<span class="t c b" style="left:692px;top:148px;width:40px;text-align:center;color:#0a0a20;">44,05</span>
<span class="t c b" style="left:737px;top:148px;width:42px;text-align:center;color:#0a0a20;">2,3</span>
<span class="t c" style="left:327px;top:165px;width:34px;text-align:right;color:#0a0a20;">17,25</span>
<span class="t c" style="left:366px;top:165px;width:41px;text-align:right;color:#0a0a20;">197,00</span>
<span class="t c" style="left:412px;top:165px;width:41px;text-align:right;color:#0a0a20;">19,75</span>
<span class="t c" style="left:458px;top:165px;width:35px;text-align:right;color:#0a0a20;">2785</span>
<span class="t c" style="left:498px;top:165px;width:38px;text-align:right;color:#0a0a20;">1810</span>
<span class="t c" style="left:541px;top:165px;width:29px;text-align:right;color:#0a0a20;">620</span>
<span class="t c" style="left:575px;top:165px;width:33px;text-align:right;color:#0a0a20;">4345</span>
<span class="t c" style="left:613px;top:165px;width:37px;text-align:right;color:#0a0a20;">2718</span>
<span class="t c" style="left:655px;top:165px;width:32px;text-align:right;color:#0a0a20;">1810</span>
<span class="t c" style="left:692px;top:165px;width:40px;text-align:right;color:#0a0a20;">124,00</span>
<span class="t c" style="left:737px;top:165px;width:42px;text-align:right;color:#0a0a20;">89,00</span>
<span class="t c b" style="left:280.5px;top:182px;width:42.5px;text-align:right;color:#0a0a20;margin-top:1px;">61,500</span>
<span class="t c b" style="left:326px;top:182px;width:36px;text-align:center;color:#0a0a20;margin-top:1px;">19,01</span>
<span class="t c b" style="left:365px;top:182px;width:43px;text-align:center;color:#0a0a20;margin-top:1px;">197,25</span>
<span class="t c b" style="left:411px;top:182px;width:43px;text-align:center;color:#0a0a20;margin-top:1px;">20,48</span>
<span class="t c b" style="left:457px;top:182px;width:37px;text-align:center;color:#0a0a20;margin-top:1px;">2788</span>
<span class="t c b" style="left:497px;top:182px;width:40px;text-align:center;color:#0a0a20;margin-top:1px;">1810</span>
<span class="t c b" style="left:540px;top:182px;width:31px;text-align:center;color:#0a0a20;margin-top:1px;">626</span>
<span class="t c b" style="left:574px;top:182px;width:35px;text-align:center;color:#0a0a20;margin-top:1px;">4372</span>
<span class="t c b" style="left:612px;top:182px;width:39px;text-align:center;color:#0a0a20;margin-top:1px;">1659</span>
<span class="t c b" style="left:654px;top:182px;width:34px;text-align:center;color:#0a0a20;margin-top:1px;">1477</span>
<span class="t c b" style="left:691px;top:182px;width:42px;text-align:center;color:#0a0a20;margin-top:1px;">168,1</span>
<span class="t c b" style="left:736px;top:182px;width:44px;text-align:center;color:#0a0a20;margin-top:1px;">91,25</span>
<span class="t" style="left:28px;top:238.5px;width:237px;text-align:center;font-size:13px;line-height:17px;color:#0a0a20;">Показники</span>
<span class="t" style="left:300.75px;top:245.5px;font-size:13px;line-height:16px;letter-spacing:.55px;color:#0a0a20;transform:translate(-50%,-50%) rotate(-90deg);">К-сть, кг</span>
<span class="t" style="left:344.0px;top:245.5px;font-size:13px;line-height:16px;letter-spacing:.55px;color:#0a0a20;transform:translate(-50%,-50%) rotate(-90deg);">КО</span>
<span class="t" style="left:386.5px;top:245px;font-size:13px;line-height:16px;letter-spacing:.55px;color:#0a0a20;transform:translate(-50%,-50%) rotate(-90deg);">ОЕ, ВРХ, МДж</span>
<span class="t" style="left:432.5px;top:245.5px;font-size:13px;line-height:16px;letter-spacing:.55px;color:#0a0a20;transform:translate(-50%,-50%) rotate(-90deg);">СР, кг</span>
<span class="t" style="left:475.5px;top:245.5px;font-size:13px;line-height:16px;letter-spacing:.55px;color:#0a0a20;transform:translate(-50%,-50%) rotate(-90deg);">СП, г</span>
<span class="t" style="left:517.0px;top:245.5px;font-size:13px;line-height:16px;letter-spacing:.55px;color:#0a0a20;transform:translate(-50%,-50%) rotate(-90deg);">ПП, г</span>
<span class="t" style="left:555.5px;top:245.5px;font-size:13px;line-height:16px;letter-spacing:.55px;color:#0a0a20;transform:translate(-50%,-50%) rotate(-90deg);">СЖ, г</span>
<span class="t" style="left:591.5px;top:245.5px;font-size:13px;line-height:16px;letter-spacing:.55px;color:#0a0a20;transform:translate(-50%,-50%) rotate(-90deg);">СК, г</span>
<span class="t" style="left:631.5px;top:245.5px;font-size:13px;line-height:16px;letter-spacing:.55px;color:#0a0a20;transform:translate(-50%,-50%) rotate(-90deg);">Кр, г</span>
<span class="t" style="left:671.0px;top:245.5px;font-size:13px;line-height:16px;letter-spacing:.55px;color:#0a0a20;transform:translate(-50%,-50%) rotate(-90deg);">Цук, г</span>
<span class="t" style="left:712.0px;top:245.5px;font-size:13px;line-height:16px;letter-spacing:.55px;color:#0a0a20;transform:translate(-50%,-50%) rotate(-90deg);">Са, г</span>
<span class="t" style="left:758.0px;top:245.5px;font-size:13px;line-height:16px;letter-spacing:.55px;color:#0a0a20;transform:translate(-50%,-50%) rotate(-90deg);">Р, г</span>
<svg style="left:272.5px;top:199px" width="5.5" height="5.5" viewBox="0 0 6 6"><path d="M0 0h6v6z" fill="#c0284c"/></svg>
<div style="left:266px;top:281px;width:13px;height:14px;background:#e8e8f0;border:1px solid;border-color:#fff #505070 #505070 #fff;"></div>
<svg style="left:269px;top:286px" width="7" height="4" viewBox="0 0 7 4"><path d="M0 0h7l-3.5 4z" fill="#1010d0"/></svg>
<span class="t c" style="left:30px;top:296px;width:232.5px;text-align:left;color:#0a0a20;letter-spacing:-.13px;">Сіно люц.+тимофіїв</span>
<span class="t c" style="left:265.5px;top:296px;width:13.0px;text-align:center;color:#0a0a20;">*</span>
<span class="t c" style="left:284.5px;top:296px;width:34.5px;text-align:right;color:#0a0a20;">5,000</span>
<span class="t c" style="left:327px;top:296px;width:34px;text-align:center;color:#0a0a20;">3,32</span>
<span class="t c" style="left:366px;top:296px;width:41px;text-align:center;color:#0a0a20;">33,95</span>
<span class="t c" style="left:412px;top:296px;width:41px;text-align:center;color:#0a0a20;">4,200</span>
<span class="t c" style="left:458px;top:296px;width:35px;text-align:center;color:#0a0a20;">480</span>
<span class="t c" style="left:498px;top:296px;width:38px;text-align:center;color:#0a0a20;">280</span>
<span class="t c" style="left:541px;top:296px;width:29px;text-align:center;color:#0a0a20;">145</span>
<span class="t c" style="left:575px;top:296px;width:33px;text-align:center;color:#0a0a20;">1320</span>
<span class="t c" style="left:613px;top:296px;width:37px;text-align:center;color:#0a0a20;">405</span>
<span class="t c" style="left:655px;top:296px;width:32px;text-align:center;color:#0a0a20;">135</span>
<span class="t c" style="left:692px;top:296px;width:40px;text-align:center;color:#0a0a20;">49,0</span>
<span class="t c" style="left:737px;top:296px;width:42px;text-align:center;color:#0a0a20;">12,6</span>
<span class="t c" style="left:30px;top:313px;width:232.5px;text-align:left;color:#0a0a20;letter-spacing:-.13px;">Трава заливних луків</span>
<span class="t c" style="left:265.5px;top:313px;width:13.0px;text-align:center;color:#0a0a20;">*</span>
<span class="t c" style="left:284.5px;top:313px;width:34.5px;text-align:right;color:#0a0a20;">17,000</span>
<span class="t c" style="left:327px;top:313px;width:34px;text-align:center;color:#0a0a20;">4,08</span>
<span class="t c" style="left:366px;top:313px;width:41px;text-align:center;color:#0a0a20;">49,81</span>
<span class="t c" style="left:412px;top:313px;width:41px;text-align:center;color:#0a0a20;">5,270</span>
<span class="t c" style="left:458px;top:313px;width:35px;text-align:center;color:#0a0a20;">663</span>
<span class="t c" style="left:498px;top:313px;width:38px;text-align:center;color:#0a0a20;">343</span>
<span class="t c" style="left:541px;top:313px;width:29px;text-align:center;color:#0a0a20;">170</span>
<span class="t c" style="left:575px;top:313px;width:33px;text-align:center;color:#0a0a20;">1202</span>
<span class="t c" style="left:613px;top:313px;width:37px;text-align:center;color:#0a0a20;">307</span>
<span class="t c" style="left:655px;top:313px;width:32px;text-align:center;color:#0a0a20;">408</span>
<span class="t c" style="left:692px;top:313px;width:40px;text-align:center;color:#0a0a20;">47,6</span>
<span class="t c" style="left:737px;top:313px;width:42px;text-align:center;color:#0a0a20;">22,1</span>
<span class="t c" style="left:30px;top:330px;width:232.5px;text-align:left;color:#0a0a20;letter-spacing:-.13px;">Трава конюш.-тимофіїв.</span>
<span class="t c" style="left:265.5px;top:330px;width:13.0px;text-align:center;color:#0a0a20;">*</span>
<span class="t c" style="left:284.5px;top:330px;width:34.5px;text-align:right;color:#0a0a20;">3,000</span>
<span class="t c" style="left:327px;top:330px;width:34px;text-align:center;color:#0a0a20;">0,72</span>
<span class="t c" style="left:366px;top:330px;width:41px;text-align:center;color:#0a0a20;">8,40</span>
<span class="t c" style="left:412px;top:330px;width:41px;text-align:center;color:#0a0a20;">0,930</span>
<span class="t c" style="left:458px;top:330px;width:35px;text-align:center;color:#0a0a20;">126</span>
<span class="t c" style="left:498px;top:330px;width:38px;text-align:center;color:#0a0a20;">78</span>
<span class="t c" style="left:541px;top:330px;width:29px;text-align:center;color:#0a0a20;">27</span>
<span class="t c" style="left:575px;top:330px;width:33px;text-align:center;color:#0a0a20;">185</span>
<span class="t c" style="left:613px;top:330px;width:37px;text-align:center;color:#0a0a20;">34</span>
<span class="t c" style="left:655px;top:330px;width:32px;text-align:center;color:#0a0a20;">72</span>
<span class="t c" style="left:692px;top:330px;width:40px;text-align:center;color:#0a0a20;">10,5</span>
<span class="t c" style="left:737px;top:330px;width:42px;text-align:center;color:#0a0a20;">2,7</span>
<span class="t c" style="left:30px;top:347px;width:232.5px;text-align:left;color:#0a0a20;letter-spacing:-.13px;">Трава вико-овес</span>
<span class="t c" style="left:265.5px;top:347px;width:13.0px;text-align:center;color:#0a0a20;">*</span>
<span class="t c" style="left:284.5px;top:347px;width:34.5px;text-align:right;color:#0a0a20;">8,000</span>
<span class="t c" style="left:327px;top:347px;width:34px;text-align:center;color:#0a0a20;">1,44</span>
<span class="t c" style="left:366px;top:347px;width:41px;text-align:center;color:#0a0a20;">12,64</span>
<span class="t c" style="left:412px;top:347px;width:41px;text-align:center;color:#0a0a20;">1,600</span>
<span class="t c" style="left:458px;top:347px;width:35px;text-align:center;color:#0a0a20;">172</span>
<span class="t c" style="left:498px;top:347px;width:38px;text-align:center;color:#0a0a20;">192</span>
<span class="t c" style="left:541px;top:347px;width:29px;text-align:center;color:#0a0a20;">56</span>
<span class="t c" style="left:575px;top:347px;width:33px;text-align:center;color:#0a0a20;">464</span>
<span class="t c" style="left:613px;top:347px;width:37px;text-align:center;color:#0a0a20;">48</span>
<span class="t c" style="left:655px;top:347px;width:32px;text-align:center;color:#0a0a20;">184</span>
<span class="t c" style="left:692px;top:347px;width:40px;text-align:center;color:#0a0a20;">16,0</span>
<span class="t c" style="left:737px;top:347px;width:42px;text-align:center;color:#0a0a20;">8,8</span>
<span class="t c" style="left:30px;top:364px;width:232.5px;text-align:left;color:#0a0a20;letter-spacing:-.13px;">Трава&nbsp; пасовища</span>
<span class="t c" style="left:265.5px;top:364px;width:13.0px;text-align:center;color:#0a0a20;">*</span>
<span class="t c" style="left:284.5px;top:364px;width:34.5px;text-align:right;color:#0a0a20;">25,000</span>
<span class="t c" style="left:327px;top:364px;width:34px;text-align:center;color:#0a0a20;">5,00</span>
<span class="t c" style="left:366px;top:364px;width:41px;text-align:center;color:#0a0a20;">55,00</span>
<span class="t c" style="left:412px;top:364px;width:41px;text-align:center;color:#0a0a20;">5,500</span>
<span class="t c" style="left:458px;top:364px;width:35px;text-align:center;color:#0a0a20;">825</span>
<span class="t c" style="left:498px;top:364px;width:38px;text-align:center;color:#0a0a20;">525</span>
<span class="t c" style="left:541px;top:364px;width:29px;text-align:center;color:#0a0a20;">175</span>
<span class="t c" style="left:575px;top:364px;width:33px;text-align:center;color:#0a0a20;">1103</span>
<span class="t c" style="left:613px;top:364px;width:37px;text-align:center;color:#0a0a20;">0</span>
<span class="t c" style="left:655px;top:364px;width:32px;text-align:center;color:#0a0a20;">625</span>
<span class="t c" style="left:692px;top:364px;width:40px;text-align:center;color:#0a0a20;">42,5</span>
<span class="t c" style="left:737px;top:364px;width:42px;text-align:center;color:#0a0a20;">30,0</span>
<span class="t c" style="left:30px;top:381px;width:232.5px;text-align:left;color:#0a0a20;letter-spacing:-.13px;">Пшениця зерно</span>
<span class="t c" style="left:265.5px;top:381px;width:13.0px;text-align:center;color:#0a0a20;">*</span>
<span class="t c" style="left:284.5px;top:381px;width:34.5px;text-align:right;color:#0a0a20;">3,500</span>
<span class="t c" style="left:327px;top:381px;width:34px;text-align:center;color:#0a0a20;">4,45</span>
<span class="t c" style="left:366px;top:381px;width:41px;text-align:center;color:#0a0a20;">37,45</span>
<span class="t c" style="left:412px;top:381px;width:41px;text-align:center;color:#0a0a20;">2,975</span>
<span class="t c" style="left:458px;top:381px;width:35px;text-align:center;color:#0a0a20;">522</span>
<span class="t c" style="left:498px;top:381px;width:38px;text-align:center;color:#0a0a20;">392</span>
<span class="t c" style="left:541px;top:381px;width:29px;text-align:center;color:#0a0a20;">53</span>
<span class="t c" style="left:575px;top:381px;width:33px;text-align:center;color:#0a0a20;">98</span>
<span class="t c" style="left:613px;top:381px;width:37px;text-align:center;color:#0a0a20;">865</span>
<span class="t c" style="left:655px;top:381px;width:32px;text-align:center;color:#0a0a20;">53</span>
<span class="t c" style="left:692px;top:381px;width:40px;text-align:center;color:#0a0a20;">2,5</span>
<span class="t c" style="left:737px;top:381px;width:42px;text-align:center;color:#0a0a20;">15,1</span>
<div style="left:389.5px;top:110px;width:108px;height:19.5px;background:#ffffe1;border:1px solid #000;"></div>
<span class="t" style="left:391.5px;top:112.5px;font-size:10.55px;line-height:14px;">Процентный формат</span>
<div style="left:782px;top:113px;width:18px;height:423px;background:#d6d3ce;"></div>
<div style="left:783px;top:113px;width:16px;height:422px;background:#eceae6;"></div>
<div class='btn3d' style="left:783px;top:113px;width:16px;height:7px;"></div>
<div class='btn3d' style="left:783px;top:120px;width:16px;height:16px;"></div>
<svg style="left:787px;top:126px" width="7" height="4" viewBox="0 0 7 4"><path d="M0 4h7l-3.500-4z" fill="#000"/></svg>
<div class='btn3d' style="left:783px;top:136px;width:16px;height:50px;"></div>
<div class='btn3d' style="left:783px;top:519px;width:16px;height:16px;"></div>
<svg style="left:787px;top:525px" width="7" height="4" viewBox="0 0 7 4"><path d="M0 0h7l-3.5 4z" fill="#000"/></svg>
<div style="left:0px;top:536px;width:800px;height:16px;background:#d6d3ce;"></div>
<div style="left:0px;top:535px;width:476px;height:1px;background:#404040;"></div>
<svg style="left:0px;top:537px" width="66" height="14" viewBox="0 0 66 14"><g fill="#000"><rect x="4" y="3" width="1.6" height="8"/><path d="M11 3v8l-5-4z"/><path d="M27 3v8l-5-4z"/><path d="M37 3v8l5-4z"/><path d="M51 3v8l5-4z"/><rect x="56.5" y="3" width="1.6" height="8"/></g></svg>
<svg style="left:60px;top:535px" width="160" height="17" viewBox="0 0 160 17"><path d="M3 1 L10 15.5 L72 15.500 C76 14 77 10 79 6" fill="#d6d3ce" stroke="#000" stroke-width="1"/><path d="M74 0.5 C78 4 79 12 83 15.500 L133 15.500 L141 0.5z" fill="#fff" stroke="#000" stroke-width="1"/><path d="M75 0.5h65" stroke="#fff" stroke-width="1.6"/></svg>
<span class="t" style="left:76px;top:537px;font-size:10.9px;line-height:14px;">Baza Datas</span>
<span class="t" style="left:145.5px;top:537px;font-size:11.5px;line-height:14px;font-weight:bold;">Outcom</span>
<div style="left:476px;top:537px;width:2px;height:15px;border-left:1px solid #fff;border-right:1px solid #404040;"></div>
<div style="left:479px;top:536px;width:299px;height:16px;background:#eceae6;"></div>
<div class='btn3d' style="left:479px;top:536px;width:16px;height:16px;"></div>
<svg style="left:484px;top:540px" width="4" height="7" viewBox="0 0 4 7"><path d="M4 0v7l-4-3.5z" fill="#000"/></svg>
<div class='btn3d' style="left:495px;top:536px;width:80px;height:16px;"></div>
<div class='btn3d' style="left:762px;top:536px;width:16px;height:16px;"></div>
<svg style="left:768px;top:540px" width="4" height="7" viewBox="0 0 4 7"><path d="M0 0v7l4-3.500z" fill="#000"/></svg>
<div class='btn3d' style="left:778px;top:536px;width:5px;height:16px;"></div>
<div style="left:783px;top:535px;width:17px;height:17px;background:#d6d3ce;border-left:2px solid #606060;border-top:2px solid #606060;"></div>
<div style="left:0px;top:552px;width:800px;height:21px;background:#d6d3ce;"></div>
<div style="left:0px;top:552px;width:800px;height:1px;background:#f4f2ee;"></div>
<span class="t" style="left:4px;top:557px;font-size:11.4px;line-height:14px;">Фильтр: отбор</span>
<span class="t" style="left:468px;top:557px;font-size:10.9px;line-height:14px;width:170px;text-align:center;">Сумма=39802,59</span>
<span class="t" style="left:680px;top:557px;font-size:11.4px;line-height:14px;">NUM</span>
<div style="left:0px;top:573px;width:800px;height:27px;background:#d6d3ce;border-top:1px solid #fff;"></div>
<div style="left:0px;top:571px;width:800px;height:1px;background:#d6d3ce;"></div>
<div class='btn3d' style="left:2px;top:576px;width:54px;height:22px;"></div>
<svg style="left:4px;top:577px" width="20" height="19" viewBox="0 0 20 19"><path d="M1 5c3-1.500 6 .500 10-.500v3c-4 1-7-1-10 .500z" fill="#d83a30"/><path d="M.500 9c3-1.500 6 .500 10-.500v3c-4 1-7-1-10 .500z" fill="#7a3ab0"/><path d="M0 13c3-1.500 6 .500 10-.500v3c-4 1-7-1-10 .500z" fill="#2a3ac0"/><path d="M9.500 3.500c3-2.500 6 .500 9.500-1.500l-2 14c-3 2-6-1-9.500 1.500z" fill="#111"/><rect x="11.500" y="5" width="2.400" height="2.600" fill="#e04030"/><rect x="14.800" y="4.600" width="2.400" height="2.600" fill="#40b850"/><rect x="10.800" y="10" width="2.400" height="2.600" fill="#4060e0"/><rect x="14.100" y="9.600" width="2.400" height="2.600" fill="#f0d838"/></svg>
<span class="t" style="left:24px;top:580px;font-weight:bold;font-size:12px;line-height:14px;transform:scale(1,1.15);">Пуск</span>
<div style="left:60px;top:576px;width:2px;height:22px;border-left:1px solid #808080;border-right:1px solid #fff;"></div>
<div style="left:64px;top:577px;width:3px;height:20px;border-left:1px solid #fff;border-right:1px solid #808080;"></div>
<svg style="left:72px;top:578px" width="18" height="18" viewBox="0 0 18 18"><rect x="1" y="3" width="10" height="8" fill="#f4f4ff" stroke="#101050" stroke-width="1.400"/><rect x="1" y="3" width="10" height="2.500" fill="#1a2a90"/><rect x="7" y="8" width="10" height="8" fill="#f4f4ff" stroke="#101050" stroke-width="1.400"/><rect x="7" y="8" width="10" height="2.500" fill="#1a2a90"/><path d="M2 13.500c0 3 3 3 5 1.500" stroke="#101050" fill="none" stroke-width="1.300"/><rect x="3" y="6.500" width="4" height="3" fill="#3a5ad0"/></svg>
<svg style="left:96px;top:578px" width="18" height="18" viewBox="0 0 18 18"><circle cx="9" cy="9.500" r="6" fill="none" stroke="#2058d0" stroke-width="3.400"/><rect x="9" y="9" width="8" height="2.500" fill="#d6d3ce"/><path d="M3.500 9.500h10" stroke="#2058d0" stroke-width="2.400"/><path d="M1.500 14.500c3-9 10-13 15-12" fill="none" stroke="#3a8ae8" stroke-width="1.300"/></svg>
<svg style="left:118px;top:578px" width="18" height="18" viewBox="0 0 18 18"><rect x="1" y="1" width="16" height="16" fill="#14148a" stroke="#080850"/><rect x="3" y="3.500" width="12" height="11.500" fill="#20209a"/><path d="M3 2.500h12" stroke="#e8ecff" stroke-width="1"/><path d="M4 6l2.300 8 2.700-6 2.700 6 2.300-8" fill="none" stroke="#fff" stroke-width="1.700"/></svg>
<svg style="left:141.5px;top:578px" width="18" height="18" viewBox="0 0 18 18"><rect x="1" y="1" width="16" height="16" fill="#1e7a34" stroke="#0c4a1c"/><rect x="3" y="3" width="12" height="12" fill="#7cc88a" stroke="#d8f0dc" stroke-width=".8"/><path d="M5 5l8 8M13 5l-8 8" stroke="#0c4a1c" stroke-width="2.300"/></svg>
<svg style="left:164px;top:578px" width="18" height="18" viewBox="0 0 18 18"><rect x="1.500" y="4" width="13" height="12.500" fill="#14207a" stroke="#0a0a40"/><rect x="3.500" y="8" width="8" height="7" fill="#f4f4e0"/><path d="M8 13l6.500-10 2.200 1.500-6.500 10z" fill="#f0c428" stroke="#443"/><path d="M8 13l-.500 2.500 2.500-1z" fill="#222"/></svg>
<div style="left:197px;top:576px;width:2px;height:22px;border-left:1px solid #808080;border-right:1px solid #fff;"></div>
<div style="left:201px;top:577px;width:3px;height:20px;border-left:1px solid #fff;border-right:1px solid #808080;"></div>
<div class='btn3d' style="left:205px;top:576px;width:136px;height:22px;"></div>
<svg style="left:210px;top:579px" width="18" height="16" viewBox="0 0 18 16"><path d="M1.500 13.500v-10h4l1.500 2h7v2" fill="#f8ec9a" stroke="#222"/><path d="M1.500 13.500l3-6h12l-3 6z" fill="#f0dc5a" stroke="#222"/></svg>
<span class="t" style="left:228px;top:580px;font-size:10.7px;line-height:14px;">razion</span>
<div class='btn3d' style="left:344px;top:576px;width:136px;height:22px;"></div>
<svg style="left:349px;top:579px" width="18" height="16" viewBox="0 0 18 16"><path d="M1.500 13.500v-10h4l1.500 2h7v2" fill="#f8ec9a" stroke="#222"/><path d="M1.500 13.500l3-6h12l-3 6z" fill="#f0dc5a" stroke="#222"/></svg>
<span class="t" style="left:367px;top:580px;font-size:10.7px;line-height:14px;">razion</span>
<div style="left:483px;top:576px;width:136px;height:22px;background:#fff;border:1px solid;border-color:#404040 #fff #fff #404040;box-shadow:inset 1px 1px 0 #808080;"></div>
<svg style="left:488px;top:579px" width="16" height="16" viewBox="0 0 16 16"><rect x=".500" y=".500" width="15" height="15" fill="#1a702e" stroke="#0c4a1c"/><rect x="2" y="2" width="12" height="12" fill="none" stroke="#d8f0dc" stroke-width="1"/><path d="M4 4l8 8M12 4l-8 8" stroke="#fff" stroke-width="2"/></svg>
<span class="t" style="left:506px;top:580px;font-size:11.400px;line-height:14px;font-weight:bold;">Microsoft Excel - P...</span>
<div class='sunk' style="left:630px;top:576px;width:167px;height:23.5px;"></div>
<svg style="left:634px;top:579px" width="16" height="16" viewBox="0 0 16 16"><path d="M2 6h3l4-4v12l-4-4h-3z" fill="#e8e080" stroke="#222"/><path d="M11 5c1.500 1.500 1.500 4.500 0 6" stroke="#5a8a5a" fill="none"/></svg>
<svg style="left:652px;top:579px" width="16" height="16" viewBox="0 0 16 16"><rect x="2" y="2" width="8" height="6" fill="#3a8a8a" stroke="#222"/><rect x="5" y="7" width="8" height="6" fill="#5aa0a0" stroke="#222"/><path d="M9 10l5 5M14 10l-5 5" stroke="#e01010" stroke-width="1.800"/></svg>
<svg style="left:670px;top:579px" width="16" height="16" viewBox="0 0 16 16"><rect x="1" y="1" width="14" height="14" fill="#2a6a3a"/><path d="M8 2l5 6-5 6-5-6z" fill="#58c858"/><rect x="1" y="1" width="14" height="14" fill="none" stroke="#222" stroke-dasharray="2 1"/></svg>
<div style="left:688px;top:579px;width:18px;height:16px;background:#1a2a9a;"></div>
<span class="t" style="left:688px;top:580px;width:18px;text-align:center;color:#fff;font-size:10.500px;line-height:14px;">EN</span>
<svg style="left:708px;top:579px" width="16" height="16" viewBox="0 0 16 16"><circle cx="8" cy="8" r="6.500" fill="#f4f4f4" stroke="#222" stroke-dasharray="2.500 1.200" stroke-width="1.600"/><path d="M8 4v4l3 2" stroke="#222" fill="none"/></svg>
<svg style="left:726px;top:579px" width="16" height="16" viewBox="0 0 16 16"><path d="M2 1.500h12v7c0 3-3 5-6 6.500-3-1.500-6-3.500-6-6.500z" fill="#f8f8ff" stroke="#1a2aa0" stroke-width="1.600"/><path d="M5 4l3 7 3-7" fill="none" stroke="#d01020" stroke-width="2"/></svg>
<span class="t" style="left:755px;top:581px;font-size:12px;line-height:14px;">16:03</span>
</div></body></html>
